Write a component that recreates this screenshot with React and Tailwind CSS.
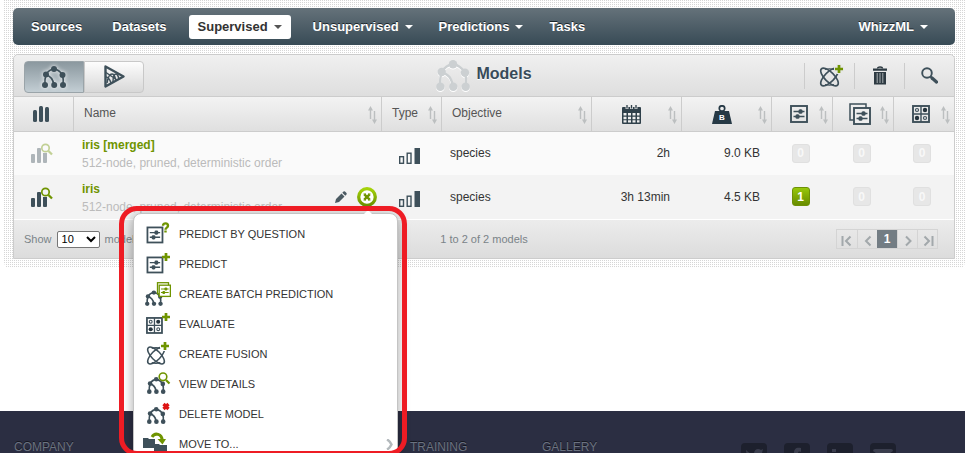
import React from "react";

const DARK = "#3e505a";
const GREEN = "#6f9400";

function Caret() {
  return (
    <svg viewBox="0 0 8 4" className="h-1 w-2 shrink-0" fill="currentColor" aria-hidden="true">
      <path d="M0 0h8L4 4z" />
    </svg>
  );
}

function TreeShape({ color = DARK, stroke = 1.7 }) {
  return (
    <g fill={color} stroke={color}>
      <path
        d="M12 3Q7 3.500 4 8.500M12 3q5 .500 8.500 6M4 9Q2.500 13 3 19M4 9c5 1 7 4 8 10M20.500 9q1.200 4 .500 10"
        fill="none"
        strokeWidth={stroke}
      />
      <g stroke="none">
        <circle cx="12" cy="3" r="3" />
        <circle cx="4" cy="8.500" r="3" />
        <circle cx="20.500" cy="9" r="3" />
        <circle cx="3" cy="19" r="3" />
        <circle cx="12.200" cy="19" r="3" />
        <circle cx="21" cy="19" r="3" />
      </g>
    </g>
  );
}

function TreeIcon({ className, color }) {
  return (
    <svg viewBox="0 0 24 22" className={className} aria-hidden="true">
      <TreeShape color={color} />
    </svg>
  );
}

function SlidersShape({ color = DARK, fill = "none" }) {
  return (
    <g>
      <rect x="1" y="1" width="16" height="16" fill={fill} stroke={color} strokeWidth="1.900" />
      <path d="M3.500 6.500h11M3.500 11.500h11" stroke={color} strokeWidth="1.500" />
      <rect x="8.500" y="4.300" width="4" height="4.400" rx="1.500" fill={color} />
      <rect x="5.500" y="9.300" width="4" height="4.400" rx="1.500" fill={color} />
    </g>
  );
}

function EvalShape() {
  return (
    <g>
      <rect x="1" y="1" width="16" height="16" fill="none" stroke={DARK} strokeWidth="1.900" />
      <path d="M9 1v16M1 9h16" stroke={DARK} strokeWidth="1.400" />
      <g fill="none" stroke={DARK} strokeWidth="1.200">
        <circle cx="5" cy="5" r="1.500" />
        <circle cx="13" cy="13" r="1.500" />
      </g>
      <g fill="#24333c">
        <circle cx="13" cy="5" r="2.200" />
        <circle cx="5" cy="13" r="2.200" />
      </g>
    </g>
  );
}

function FusionShape() {
  return (
    <g fill="none" stroke={DARK} strokeWidth="1.600">
      <ellipse cx="9.500" cy="10" rx="11.500" ry="4.800" transform="rotate(45 9.500 10)" />
      <ellipse cx="9.500" cy="10" rx="11.500" ry="4.800" transform="rotate(-45 9.500 10)" />
      <path d="M5 2.500q4.500-1.500 9 0M5 17.500q4.500 1.500 9 0" strokeWidth="1.200" />
    </g>
  );
}

function PlusShape({ x, y }) {
  return <path d={`M${x} ${y - 4}v8M${x - 4} ${y}h8`} stroke={GREEN} strokeWidth="2.700" fill="none" />;
}

function FusionIcon() {
  return (
    <svg viewBox="0 0 26 26" className="h-[26px] w-[26px]" aria-hidden="true">
      <g transform="translate(2 4)">
        <FusionShape />
      </g>
      <path d="M16 6h10M21 1v10" stroke="#e6e6e6" strokeWidth="5" />
      <PlusShape x={21} y={6} />
    </svg>
  );
}

function TrashIcon() {
  return (
    <svg viewBox="0 0 14 19" className="h-[19px] w-3.5" aria-hidden="true">
      <path d="M4.500 2.500c0-2 5-2 5 0" fill="none" stroke="#2d3a42" strokeWidth="1.300" />
      <path d="M0 2.500h14v2.200H0zM1 6h12v12.500H1z" fill="#2d3a42" />
      <path d="M4.200 7v10M7 7v10M9.800 7v10" stroke="#a8aeb1" strokeWidth="1" />
    </svg>
  );
}

function SearchIcon() {
  return (
    <svg viewBox="0 0 17 17" className="h-[17px] w-[17px]" aria-hidden="true">
      <circle cx="6" cy="6" r="4.800" fill="none" stroke={DARK} strokeWidth="1.900" />
      <path d="M9.500 9.500 11 11" stroke={DARK} strokeWidth="2" />
      <path d="m11 11 4.500 4" stroke={DARK} strokeWidth="3.200" strokeLinecap="round" />
    </svg>
  );
}

function ScriptIcon() {
  return (
    <svg viewBox="0 0 21 23" className="h-[23px] w-[21px]" fill="none" stroke={DARK} aria-hidden="true">
      <path d="M1.500 1.500 19.500 11.500 1.500 21.500z" strokeWidth="2.400" strokeLinejoin="round" />
      <path d="M2 7.500l11 7.500M2 12c3 0 4 3 5 6M3 18c1-6 3-9 5-9 3 0 3 4 4 7M9 17c0-5 1-8 3-8 2 0 2 2 3 5" strokeWidth="1.500" />
    </svg>
  );
}

function SortArrows() {
  return (
    <svg viewBox="0 0 9 18" className="mt-px h-[18px] w-[9px] shrink-0" aria-hidden="true">
      <path d="M2.500 3v10M6.500 5v10" stroke="#bcbfc0" strokeWidth="1.400" />
      <path d="M2.500 0 5 4.500H0zM6.500 18 9 13.500H4z" fill="#bcbfc0" />
    </svg>
  );
}

function BarsIcon() {
  return (
    <svg viewBox="0 0 16 16" className="mx-auto h-4 w-4" fill={DARK} aria-hidden="true">
      <rect x="0" y="4" width="4" height="12" rx="1.500" />
      <rect x="6" y="0" width="4" height="16" rx="1.500" />
      <rect x="12" y="1" width="4" height="15" rx="1.500" />
    </svg>
  );
}

function ModelRowIcon({ faded }) {
  return (
    <svg
      viewBox="0 0 22 21"
      className={faded ? "mx-auto h-[21px] w-[22px] opacity-40" : "mx-auto h-[21px] w-[22px]"}
      aria-hidden="true"
    >
      <g fill={DARK}>
        <rect x="0" y="11" width="4" height="9" rx="1" />
        <rect x="6" y="5" width="4" height="15" rx="1" />
        <path d="M12 10h4v9q0 1-1 1h-2q-1 0-1-1z" />
      </g>
      <circle cx="14.500" cy="5" r="3.700" fill="none" stroke={GREEN} strokeWidth="1.700" />
      <path d="m17.500 8 3.500 3.500" stroke={GREEN} strokeWidth="2.300" />
    </svg>
  );
}

function TypeIcon() {
  return (
    <svg viewBox="0 0 21 16" className="h-4 w-[21px]" aria-hidden="true">
      <g fill="none" stroke={DARK} strokeWidth="1.400">
        <rect x="0.700" y="8.700" width="3.800" height="6.600" />
        <rect x="8.200" y="5.200" width="3.800" height="10.100" />
      </g>
      <rect x="15.500" y="0" width="5.500" height="16" fill={DARK} />
    </svg>
  );
}

function CalendarIcon() {
  return (
    <svg viewBox="0 0 19 19" className="h-[19px] w-[19px]" aria-hidden="true">
      <rect x="0" y="2" width="19" height="17" rx="1" fill="#2f404a" />
      <path d="M5 0v4M9.500 0v4M14 0v4" stroke="#e9e9e9" strokeWidth="2.800" />
      <path d="M5 0v3.500M9.500 0v3.500M14 0v3.500" stroke="#2f404a" strokeWidth="1.300" />
      <g fill="#eee">
        <path d="M1.500 8h3v2.500h-3zM6 8h3v2.500H6zM10.500 8h3v2.500h-3zM15 8h2.500v2.500H15zM1.500 11.700h3v2.500h-3zM6 11.700h3v2.500H6zM10.500 11.700h3v2.500h-3zM15 11.700h2.500v2.500H15zM1.500 15.300h3v2.200h-3zM6 15.300h3v2.200H6zM10.500 15.300h3v2.200h-3zM15 15.300h2.500v2.200H15z" />
      </g>
    </svg>
  );
}

function WeightIcon() {
  return (
    <svg viewBox="0 0 20 19" className="h-[19px] w-5" aria-hidden="true">
      <circle cx="10" cy="3.500" r="2.700" fill="none" stroke="#263945" strokeWidth="1.700" />
      <path d="M3 6h14l3 13H0z" fill="#263945" />
      <text x="10" y="15" textAnchor="middle" fill="#fff" className="font-['Liberation_Sans',sans-serif] text-[8px] font-bold">
        B
      </text>
    </svg>
  );
}

function SlidersIcon() {
  return (
    <svg viewBox="0 0 18 18" className="h-[18px] w-[18px]" aria-hidden="true">
      <SlidersShape />
    </svg>
  );
}

function BatchIcon() {
  return (
    <svg viewBox="0 0 22 22" className="h-[22px] w-[22px]" aria-hidden="true">
      <rect x="1" y="1" width="16" height="16" fill="none" stroke={DARK} strokeWidth="1.500" />
      <g transform="translate(4 4)">
        <SlidersShape fill="#eee" />
      </g>
    </svg>
  );
}

function EvalIcon() {
  return (
    <svg viewBox="0 0 18 18" className="h-[18px] w-[18px]" aria-hidden="true">
      <EvalShape />
    </svg>
  );
}

function PencilIcon() {
  return (
    <svg viewBox="0 0 12 12" className="h-3 w-3" fill="#4b5a62" aria-hidden="true">
      <path d="M0 12 1 8 6.500 2.500l3 3L4 11zM7.300 1.700 8.500.500Q9.300 0 10 .500l1.500 1.500q.5.700 0 1.500L10.300 4.700z" />
    </svg>
  );
}

function ActionsIcon() {
  return (
    <svg viewBox="0 0 20 20" className="h-5 w-5" aria-hidden="true">
      <defs>
        <linearGradient id="ring" x1="0" y1="0" x2="0" y2="1">
          <stop offset="0" stopColor="#a5d30a" />
          <stop offset="1" stopColor="#6b9100" />
        </linearGradient>
      </defs>
      <circle cx="10" cy="10" r="8.300" fill="#fff" stroke="url(#ring)" strokeWidth="3.300" />
      <path d="m7.300 7.300 5.400 5.400M12.700 7.300l-5.400 5.400" stroke={GREEN} strokeWidth="2.400" />
      <path d="M6.500 7h2.500M11 7h2.500M6.500 13h2.500M11 13h2.500" stroke={GREEN} strokeWidth="1.200" />
    </svg>
  );
}

function MenuIcon({ kind }) {
  return (
    <svg viewBox="0 0 30 24" className="h-6 w-[30px] shrink-0" aria-hidden="true">
      {(kind === "question" || kind === "predict") && (
        <g transform="translate(5.500 4.500) scale(0.940)">
          <SlidersShape />
        </g>
      )}
      {kind === "question" && (
        <path d="M22 3.800c0-3.300 5-3.300 5 0 0 2-2.500 1.700-2.500 4M24.500 8.600v2" fill="none" stroke={GREEN} strokeWidth="2.400" />
      )}
      {kind === "predict" && <PlusShape x={25} y={5} />}
      {kind === "batch" && (
        <g>
          <g transform="translate(4 8.500) scale(0.740 0.700)">
            <TreeShape stroke={2.2} />
          </g>
          <rect x="16.500" y="0.700" width="11" height="11" fill="#fff" stroke={GREEN} strokeWidth="1.300" />
          <g transform="translate(17.500 2.500) scale(0.700)">
            <SlidersShape color={GREEN} fill="#fff" />
          </g>
        </g>
      )}
      {kind === "evaluate" && (
        <g>
          <g transform="translate(5 5) scale(0.940)">
            <EvalShape />
          </g>
          <PlusShape x={25} y={5} />
        </g>
      )}
      {kind === "fusion" && (
        <g>
          <g transform="translate(6 4) scale(0.950)">
            <FusionShape />
          </g>
          <path d="M19 4h10M24 0v9" stroke="#fff" strokeWidth="5" />
          <PlusShape x={24} y={4} />
        </g>
      )}
      {(kind === "details" || kind === "delete") && (
        <g transform="translate(6 5) scale(0.770)">
          <TreeShape stroke={2.2} />
        </g>
      )}
      {kind === "details" && (
        <g>
          <circle cx="22" cy="4.800" r="3.800" fill="#fff" stroke={GREEN} strokeWidth="1.600" />
          <path d="m25 8 3.500 3.500" stroke={GREEN} strokeWidth="2.200" />
        </g>
      )}
      {kind === "delete" && <path d="m22.500 2 5 5m0-5-5 5" stroke="#dd1414" strokeWidth="3.200" />}
      {kind === "move" && (
        <g>
          <path d="M2 6h5l1 1h6v9H2zM13 12h5l1 1h7v8H13z" fill={DARK} />
          <path d="M11 5c3-5 10-3 10 3" fill="none" stroke={GREEN} strokeWidth="3" />
          <path d="M16.500 7h8.500l-3.500 5.500z" fill={GREEN} />
        </g>
      )}
    </svg>
  );
}

const NAV = [
  { label: "Sources" },
  { label: "Datasets" },
  { label: "Supervised", menu: true, active: true },
  { label: "Unsupervised", menu: true },
  { label: "Predictions", menu: true },
  { label: "Tasks" },
];

function navItemStyle(item) {
  if (item.active) return "px-[9px] bg-white text-[#333] [&>svg]:text-[#555]";
  if (item.menu) return "pl-2 pr-1 text-white [text-shadow:0_-1px_0_#1c262c]";
  return "px-2 text-white [text-shadow:0_-1px_0_#1c262c]";
}

function NavItem({ item }) {
  return (
    <button
      type="button"
      className={"flex h-6 items-center gap-[6px] rounded-[3px] text-[13px] font-bold " + navItemStyle(item)}
    >
      {item.label}
      {item.menu && <Caret />}
    </button>
  );
}

const MENU = [
  ["question", "PREDICT BY QUESTION"],
  ["predict", "PREDICT"],
  ["batch", "CREATE BATCH PREDICTION"],
  ["evaluate", "EVALUATE"],
  ["fusion", "CREATE FUSION"],
  ["details", "VIEW DETAILS"],
  ["delete", "DELETE MODEL"],
  ["move", "MOVE TO..."],
];

function ActionMenu() {
  return (
    <div className="absolute -right-[21px] top-[26px] z-20 w-[265px]">
      <ul className="rounded-[8px] border border-[#c4c4c4] bg-white py-[5px] shadow-[0_2px_12px_rgba(0,0,0,0.35)]">
        {MENU.map(([kind, label]) => (
          <li key={kind}>
            <button
              type="button"
              className="flex h-[30px] w-full items-center gap-2 pl-[7px] pr-[3px] text-left text-[11px] text-[#333]"
            >
              <MenuIcon kind={kind} />
              <span className="flex-1">{label}</span>
              {kind === "move" && (
                <svg viewBox="0 0 8 11" className="h-[11px] w-2" fill="none" stroke="#b4babd" strokeWidth="2.500" aria-hidden="true">
                  <path d="M1 0.500c2 1 3.500 3 4.500 5-1 2-2.500 4-4.500 5" />
                </svg>
              )}
            </button>
          </li>
        ))}
      </ul>
      <svg viewBox="0 0 12 6" className="absolute -top-[3px] right-[24px] h-[6px] w-3" aria-hidden="true">
        <path d="M0 6 6 0l6 6z" fill="#fff" />
      </svg>
      <div className="pointer-events-none absolute -left-[14px] -top-[7px] h-[250px] w-[288px] rounded-[18px] border-[5px] border-[#ee1c24]" />
    </div>
  );
}

function Badge({ value }) {
  const on = value > 0;
  return (
    <a
      href="#models"
      className={
        on
          ? "mx-auto flex h-[19px] w-[18px] items-center justify-center rounded-[3px] border border-[#6d9106] bg-gradient-to-b from-[#97c80a] to-[#688c00] text-[12px] font-bold text-white"
          : "mx-auto flex h-[19px] w-[18px] items-center justify-center rounded-[3px] border border-[#e0e0e0] bg-[#e7e7e7] text-[12px] font-bold text-[#f8f8f8]"
      }
    >
      {value}
    </a>
  );
}

const HEAD_STYLES = {
  text: "flex-1 pb-[2px] pl-[10px] text-left",
  wide: "flex flex-1 justify-center pl-[3px]",
  narrow: "flex flex-1 justify-center pl-[6px]",
};

function HeadCell({ children, kind }) {
  return (
    <th scope="col" className="border-r border-[#ccc] p-0 font-normal">
      <div className="flex items-center pr-1">
        <span className={HEAD_STYLES[kind]}>{children}</span>
        <SortArrows />
      </div>
    </th>
  );
}

const ROWS = [
  { name: "iris [merged]", age: "2h", size: "9.0 KB", counts: [0, 0, 0], faded: true },
  { name: "iris", age: "3h 13min", size: "4.5 KB", counts: [1, 0, 0], open: true },
];

function ModelRow({ row }) {
  return (
    <tr className={row.open ? "h-11 bg-[#f3f3f3]" : "h-[43px] bg-[#fafafa]"}>
      <td className="p-0 pr-1">
        <ModelRowIcon faded={row.faded} />
      </td>
      <td className="p-0">
        <div className="flex items-center pl-[8px] pr-[5px]">
          <div className="min-w-0 flex-1 whitespace-nowrap pt-px leading-[18px]">
            <a href="#model" className="block font-bold text-[#6f9400]">
              {row.name}
            </a>
            <p className="text-[#bbb]">512-node, pruned, deterministic order</p>
          </div>
          {row.open && (
            <div className="flex items-center gap-[10px]">
              <button type="button" aria-label="Edit name">
                <PencilIcon />
              </button>
              <div className="relative h-5">
                <button type="button" aria-label="Actions" className="block">
                  <ActionsIcon />
                </button>
                <ActionMenu />
              </div>
            </div>
          )}
        </div>
      </td>
      <td className="p-0 pl-[17px] pt-1">
        <TypeIcon />
      </td>
      <td className="p-0 pl-[8px] pb-px">species</td>
      <td className="p-0 pr-[12px] pb-px text-right">{row.age}</td>
      <td className="p-0 pr-[12px] pb-px text-right">{row.size}</td>
      {row.counts.map((count, i) => (
        <td key={i} className="p-0 pr-1 pb-px">
          <Badge value={count} />
        </td>
      ))}
    </tr>
  );
}

function PageButton({ label, d }) {
  return (
    <button
      type="button"
      aria-label={label}
      className="flex h-[18px] w-5 items-center justify-center border-l border-[#d4d4d4] first:border-l-0"
    >
      <svg viewBox="0 0 12 12" className="mt-[3px] h-3 w-3" fill="none" stroke="#a2a8ab" strokeWidth="2" aria-hidden="true">
        <path d={d} />
      </svg>
    </button>
  );
}

function Social({ children, label }) {
  return (
    <a href="#social" aria-label={label} className="h-[26px] w-[26px] rounded-[4px] bg-[#1d202d]">
      <svg viewBox="0 0 26 26" className="h-[26px] w-[26px]" fill="#3a3d4d" stroke="none" aria-hidden="true">
        {children}
      </svg>
    </a>
  );
}

export default function App() {
  return (
    <div className="flex h-screen flex-col overflow-hidden bg-white font-['Liberation_Sans',Arial,sans-serif] text-[12px] text-[#333]">
      <main className="pb-[143px] pl-1">
        <div className="rounded-b-[6px] bg-[conic-gradient(#fff_270deg,#d6d6d6_270deg)] bg-[length:2px_2px] pb-[9px] pl-[9px] pr-[10px] pt-2">
          <nav className="mb-[9px] flex h-[37px] items-center rounded-[5px] bg-gradient-to-b from-[#65727a] to-[#384b56] px-[10px]">
            <div className="flex flex-1 items-center gap-[14px]">
              {NAV.map((item) => (
                <NavItem key={item.label} item={item} />
              ))}
            </div>
            <div className="pr-[13px]">
              <NavItem item={{ label: "WhizzML", menu: true }} />
            </div>
          </nav>

          <section className="rounded-t-[5px] border border-[#ccc] bg-[#f3f3f3]">
            <div className="grid h-[42px] grid-cols-[1fr_auto_1fr] items-center rounded-t-[5px] border-b border-[#ccc] bg-gradient-to-b from-[#f0f0f0] to-[#dedede]">
              <div className="flex pl-[10px] pt-[2px]">
                <button
                  type="button"
                  aria-label="Models"
                  className="flex h-8 w-[60px] items-center justify-center rounded-l-[4px] border border-[#9aa4a9] bg-gradient-to-b from-[#8b989f] to-[#c3ced4]"
                >
                  <TreeIcon className="h-[22px] w-6 drop-shadow-[0_0_2px_#fff]" />
                </button>
                <button
                  type="button"
                  aria-label="Scripts"
                  className="flex h-8 w-[60px] items-center justify-center rounded-r-[4px] border border-[#c8c8c8] bg-gradient-to-b from-[#fdfdfd] to-[#d8d8d8]"
                >
                  <ScriptIcon />
                </button>
              </div>
              <h1 className="flex items-center gap-[6px] text-[16px] font-bold text-[#384b59] [text-shadow:0_1px_0_#fff]">
                <TreeIcon className="h-[31px] w-[34px] drop-shadow-[0_1px_0_#fff]" color="#ccd0d2" />
                <span className="pb-1">Models</span>
              </h1>
              <div className="flex justify-end">
                <button type="button" aria-label="Create fusion" className="flex h-[26px] w-[50px] items-center justify-center border-l border-[#ccc] pl-[3px]">
                  <FusionIcon />
                </button>
                <button type="button" aria-label="Delete" className="flex h-[26px] w-[50px] items-center justify-center border-l border-[#ccc]">
                  <TrashIcon />
                </button>
                <button type="button" aria-label="Search" className="flex h-[26px] w-[50px] items-center justify-center border-l border-[#ccc]">
                  <SearchIcon />
                </button>
              </div>
            </div>

            <table className="w-full table-fixed border-separate border-spacing-0">
              <colgroup>
                <col className="w-[60px]" />
                <col />
                <col className="w-[60px]" />
                <col className="w-[150px]" />
                <col className="w-[90px]" />
                <col className="w-[90px]" />
                <col className="w-[61px]" />
                <col className="w-[61px]" />
                <col className="w-[60px]" />
              </colgroup>
              <thead>
                <tr className="h-[35px] bg-gradient-to-b from-[#f3f3f3] to-[#dfdfdf] text-[#555] [&>th]:border-b [&>th]:border-b-[#ccc] [&>th:last-child]:border-r-0">
                  <th scope="col" aria-label="Model" className="border-r border-[#ccc] p-0 pr-[5px]">
                    <BarsIcon />
                  </th>
                  <HeadCell kind="text">Name</HeadCell>
                  <HeadCell kind="text">Type</HeadCell>
                  <HeadCell kind="text">Objective</HeadCell>
                  <HeadCell kind="wide"><CalendarIcon /></HeadCell>
                  <HeadCell kind="wide"><WeightIcon /></HeadCell>
                  <HeadCell kind="narrow"><SlidersIcon /></HeadCell>
                  <HeadCell kind="narrow"><BatchIcon /></HeadCell>
                  <HeadCell kind="narrow"><EvalIcon /></HeadCell>
                </tr>
              </thead>
              <tbody>
                {ROWS.map((row) => (
                  <ModelRow key={row.name} row={row} />
                ))}
              </tbody>
            </table>

            <div className="grid h-[39px] grid-cols-[1fr_auto_1fr] items-center border-t border-white bg-gradient-to-b from-[#ececec] to-[#dcdcdc] text-[11px] text-[#7a8388]">
              <div className="flex items-center gap-[5px] pl-[10px]">
                <label htmlFor="page-size">Show</label>
                <select
                  id="page-size"
                  defaultValue="10"
                  className="h-[17px] w-[43px] rounded-[2px] border border-[#767676] bg-white text-[11px] text-black"
                >
                  <option>10</option>
                  <option>20</option>
                  <option>50</option>
                </select>
                <span>models</span>
              </div>
              <p>1 to 2 of 2 models</p>
              <div className="flex justify-end pr-4">
                <div className="flex h-5 border border-[#d4d4d4]">
                  <PageButton label="First page" d="M1.500 1v10M9.500 1.500 5 6l4.500 4.500" />
                  <PageButton label="Previous page" d="M8.500 1.500 4 6l4.500 4.500" />
                  <button type="button" className="h-[18px] w-5 bg-[#737d84] text-[12px] font-bold leading-[18px] text-white">
                    1
                  </button>
                  <PageButton label="Next page" d="M4 1.500 8.500 6 4 10.500" />
                  <PageButton label="Last page" d="M10.500 1v10M2.500 1.500 7 6l-4.500 4.500" />
                </div>
              </div>
            </div>
          </section>
        </div>
      </main>

      <footer className="flex flex-1 items-start bg-[#2b2e42] pl-[14px] pr-[69px] pt-[30px]">
        <div className="grid flex-1 grid-cols-[396px_132px_132px] leading-3 text-[#6b7280] [text-shadow:0_-1px_0_#15171f]">
          <h2>COMPANY</h2>
          <h2>TRAINING</h2>
          <h2>GALLERY</h2>
        </div>
        <div className="flex gap-[17px] pt-[2px]">
          <Social label="Twitter">
            <path d="M5 7c3 3 5 4 8 4 0-5 4-6 7-4l2-1-1 4c0 7-8 12-16 8 2 0 4 0 5-2-3-1-5-5-5-9z" />
          </Social>
          <Social label="Facebook">
            <path d="M17 5c-5-1-7 1-7 5v2H8v4h2v8h4v-8h3v-4h-3v-2c0-1 1-2 3-1z" />
          </Social>
          <Social label="LinkedIn">
            <path d="M5 6h4v3H5zM5 11h4v11H5zM11 11h4v2c3-3 7-2 7 3v6h-4v-6c0-2-3-2-3 0v6h-4z" />
          </Social>
          <Social label="Email">
            <path d="M3 8q0-2 2-2h16q2 0 2 2l-10 7zM3 10l10 7 10-7v9H3z" />
          </Social>
        </div>
      </footer>
    </div>
  );
}
